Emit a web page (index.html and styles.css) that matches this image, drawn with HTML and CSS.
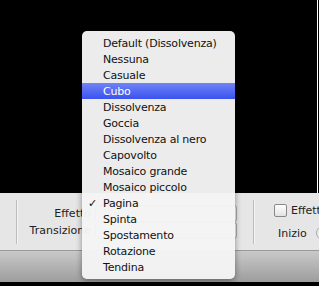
FILE: index.html
```html
<!DOCTYPE html>
<html lang="it">
<head>
	<meta charset="UTF-8">
	<title>Transizione</title>
	<link rel="stylesheet" href="styles.css">
</head>
<body>
	<div class="stage">
		<div class="video"></div>
		<div class="edge"></div>
	</div>
	<div class="panel">
		<div class="sep first"></div>
		<div class="fields">
			<div class="row">
				<span class="label">Effetto</span>
				<span class="popup"></span>
			</div>
			<div class="row">
				<span class="label">Transizione</span>
				<span class="popup"></span>
			</div>
		</div>
		<div class="sep"></div>
		<div class="opts">
			<div class="row">
				<span class="check"></span>
				<span class="label">Effetto</span>
			</div>
			<div class="row">
				<span class="label">Inizio</span>
				<span class="knob"></span>
			</div>
		</div>
	</div>
	<div class="bar"></div>

	<ul class="menu">
		<li>Default (Dissolvenza)</li>
		<li>Nessuna</li>
		<li>Casuale</li>
		<li class="on">Cubo</li>
		<li>Dissolvenza</li>
		<li>Goccia</li>
		<li>Dissolvenza al nero</li>
		<li>Capovolto</li>
		<li>Mosaico grande</li>
		<li>Mosaico piccolo</li>
		<li class="checked">Pagina</li>
		<li>Spinta</li>
		<li>Spostamento</li>
		<li>Rotazione</li>
		<li>Tendina</li>
	</ul>
</body>
</html>
```

FILE: styles.css
```css
body{
	margin: 0;
	padding: 0;
	width: 319px;
	height: 286px;
	overflow: hidden;
	background: #000;
	font-family: "DejaVu Sans", Verdana, sans-serif;
	position: relative;
}
.stage{
	height: 193px;
	display: flex;
}
.video{
	width: 317px;
	background: #000;
}
.edge{
	width: 1px;
	background: #fff;
}
.panel{
	height: 57px;
	background: #e6e6e6;
	display: flex;
	align-items: center;
	overflow: hidden;
}
.sep{
	width: 1px;
	height: 44px;
	background: #bcbcbc;
	border-right: 1px solid #f4f4f4;
	flex-shrink: 0;
}
.sep.first{
	margin-left: 16px;
}
.fields{
	width: 221px;
	flex-shrink: 0;
	display: flex;
	flex-direction: column;
	margin: 0 14px 0 0;
}
.row{
	display: flex;
	align-items: center;
	height: 17px;
	font-size: 11px;
	color: #222;
	white-space: nowrap;
}
.fields .label{
	width: 73px;
	flex-shrink: 0;
	text-align: right;
}
.popup{
	width: 140px;
	height: 15px;
	margin-left: 4px;
	border: 1px solid #aaa;
	border-radius: 3px;
	background: #f7f7f7;
}
.opts{
	padding-left: 19px;
	display: flex;
	flex-direction: column;
	gap: 6px;
}
.check{
	width: 11px;
	height: 11px;
	border: 1px solid #888;
	border-radius: 2px;
	background: linear-gradient(#fff, #e2e2e2);
	margin-right: 4px;
	flex-shrink: 0;
}
.opts .row:last-child{
	padding-left: 4px;
}
.knob{
	width: 12px;
	height: 12px;
	border-radius: 50%;
	border: 1px solid #aaa;
	background: #ececec;
	margin-left: 9px;
	flex-shrink: 0;
}
.bar{
	height: 31px;
	background: linear-gradient(#c9c9c9, #9d9d9d);
	border-top: 1px solid #9a9a9a;
}
.menu{
	position: absolute;
	left: 82px;
	top: 31px;
	width: 153px;
	margin: 0;
	padding: 4px 0;
	list-style: none;
	background: rgba(244, 244, 244, 0.97);
	border-radius: 5px;
	box-shadow: 0 2px 6px rgba(0, 0, 0, 0.4);
}
.menu li{
	height: 16px;
	line-height: 17px;
	padding-left: 21px;
	font-size: 11px;
	letter-spacing: -0.2px;
	color: #111;
	white-space: nowrap;
	position: relative;
}
.menu li.on{
	color: #fff;
	background: linear-gradient(#6f84f6, #3a52ef);
}
.menu li.checked::before{
	content: "✓";
	position: absolute;
	left: 6px;
	top: 0;
}
```
